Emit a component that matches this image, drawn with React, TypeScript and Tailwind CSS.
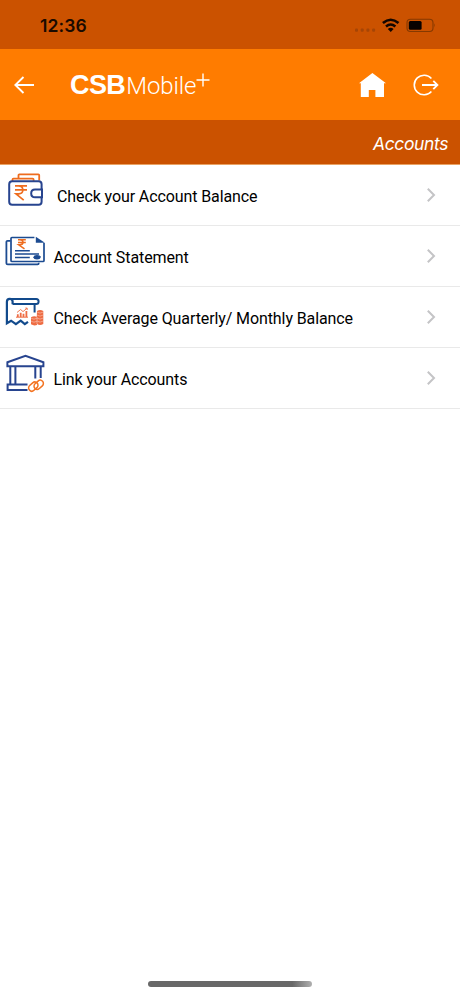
import type { ReactNode } from "react";

function WalletIcon() {
  return (
    <svg width="48" height="60" viewBox="0 0 48 60" fill="none">
      <path d="M18.5 13V10Q18.5 9.3 19.3 9.3H38.3Q39.2 9.3 39.2 10.2V15.5" stroke="#ee6c1e" strokeWidth="1.8" />
      <path d="M12.5 16V14.6Q12.5 13.6 13.5 13.6H32.6Q33.6 13.6 33.6 14.6V16" stroke="#ee6c1e" strokeWidth="1.8" />
      <rect x="9.2" y="16.3" width="32.4" height="23.4" rx="3" stroke="#27448f" strokeWidth="2" />
      <path d="M42 24.6H35Q31.2 24.6 31.2 28.4T35 32.2H42Z" fill="#fff" stroke="#27448f" strokeWidth="2" />
      <path d="M15 20.9H27M15 24.9H27M16 20.9H18.5Q22.8 21 22.8 25T18.5 28.9H16L23.7 35.2" stroke="#ee6c1e" strokeWidth="1.7" />
    </svg>
  );
}

function StatementIcon() {
  return (
    <svg width="48" height="60" viewBox="0 0 48 60" fill="none">
      <path d="M10.5 14.8H7.6Q6.4 14.8 6.4 15.8V37.2Q6.4 38.4 7.8 38.4H37.6Q38.8 38.4 38.8 36.8" stroke="#1c4b91" strokeWidth="1.8" />
      <path d="M34.4 11.5H11.9Q11 11.5 11 12.4V34.4Q11 35.5 12.1 35.5H43Q44 35.5 44 34.4V17" stroke="#1c4b91" strokeWidth="1.7" />
      <path d="M35.8 10.7V16.8H44.9Z" fill="#1c4b91" />
      <path d="M15 24.7H29.8M15 28H39M15 31.5H29.8" stroke="#1c4b91" strokeWidth="1.5" />
      <ellipse cx="37" cy="31.2" rx="3.4" ry="2.2" fill="#1c4b91" />
      <path d="M33.5 31.5L40.8 30.8" stroke="#1c4b91" />
      <path d="M18 13.8H25.8M18 16.4H25.8M18.4 13.8H20Q23 13.9 23 16.3T20 18.8H18.7L24.5 22.8" stroke="#ee6c1e" strokeWidth="1.5" />
    </svg>
  );
}

function AverageIcon() {
  return (
    <svg width="48" height="60" viewBox="0 0 48 60" fill="none">
      <path
        d="M12.6 17.2V14.4Q12.4 11.9 9.7 11.9Q6.9 11.9 6.9 14.8V36.3L11.1 33.7L15.9 37.2L20.7 33.7L24.8 37.2L28 34.8"
        stroke="#124a8c"
        strokeWidth="2.2"
      />
      <path d="M9.7 11.9H36.2Q38.6 12 38.6 14.5T36.2 17.1H12.6M34.6 17.2V25.5" stroke="#124a8c" strokeWidth="2" />
      <path d="M16 30.2H28" stroke="#ee6c43" />
      <path d="M17.8 30V27.3M20.7 30V25.8M23.5 30V26.8M26.4 30V24" stroke="#ee6c43" strokeWidth="1.8" />
      <path d="M17 25.5L20.6 22.5L23 24.6L27 21.3M25.3 21.1H27.2V23" stroke="#ee6c43" strokeWidth=".9" />
      <path
        d="M37 24Q40 21.8 43.3 24V37.1Q40 39 37 37.1V38Q34 39.2 31 37.3V30.2Q34 28.5 36.8 29.8Z"
        fill="#ee6c43"
      />
      <path
        d="M37.3 25.2Q40 27 42.9 25.2M37.3 28.2Q40 30 42.9 28.2M37.3 31.2Q40 33 42.9 31.2M37.3 34.2Q40 36 42.9 34.2M31.2 31.3Q34 33.1 36.8 31.3M31.2 34.3Q34 36.1 36.8 34.3M37 30V37"
        stroke="#fff"
        strokeWidth=".4"
      />
    </svg>
  );
}

function BankLinkIcon() {
  return (
    <svg width="48" height="60" viewBox="0 0 48 60" fill="none" stroke="#27448f" strokeWidth="2">
      <path d="M7.4 18.3V14.2L25.5 7.7L43.4 14.2V18.3Z" />
      <path d="M10.3 19V36.3M15.4 19V36.3M35.3 19V30.5M40.7 19V30" />
      <path d="M27.5 36.5H7.6V42.1H27.5" />
      <g stroke="#f37321" strokeWidth="1.5">
        <rect x="-5.2" y="-3.2" width="10.4" height="6.4" rx="3.2" transform="translate(33.3 38.6) rotate(-42)" />
        <rect x="-5.2" y="-3.2" width="10.4" height="6.4" rx="3.2" transform="translate(38.7 36.8) rotate(-42)" />
      </g>
    </svg>
  );
}

type Item = { label: string; icon: ReactNode; indent: string };

const items: Item[] = [
  { label: "Check your Account Balance", icon: <WalletIcon />, indent: "pl-[9px]" },
  { label: "Account Statement", icon: <StatementIcon />, indent: "pl-[5.5px]" },
  { label: "Check Average Quarterly/ Monthly Balance", icon: <AverageIcon />, indent: "pl-[5.5px]" },
  { label: "Link your Accounts", icon: <BankLinkIcon />, indent: "pl-[5.5px]" },
];

function StatusBar() {
  return (
    <div className="flex h-[49px] items-center justify-between bg-[#cb5200] pr-6 pl-10 pt-[3px]">
      <span className="pt-px font-['Inter',sans-serif] text-[17.5px] font-semibold tracking-[0.1px] text-[#1a0a00]">12:36</span>
      <svg width="82" height="18" viewBox="354 17 82 18" fill="none">
        <g fill="#a64505">
          <rect x="355" y="28.5" width="3" height="3.2" rx="1" />
          <rect x="360.7" y="28.5" width="3" height="3.2" rx="1" />
          <rect x="366.4" y="28.5" width="3" height="3.2" rx="1" />
          <rect x="372.1" y="28.5" width="3" height="3.2" rx="1" />
        </g>
        <path d="M382.9 23.1Q390.7 16.4 398.5 23.1M386 26.4Q390.7 22.6 395.4 26.4" stroke="#120600" strokeWidth="2.6" />
        <path d="M387.8 28.9Q390.7 26.8 393.6 28.9L390.7 32Z" fill="#120600" />
        <rect x="407" y="19.2" width="26" height="12.3" rx="3.5" stroke="#853900" strokeWidth="1.1" />
        <rect x="408.8" y="21" width="12.8" height="8.8" rx="1.5" fill="#080200" />
        <path d="M434.3 23.2Q436 25.3 434.3 27.4Z" fill="#853900" />
      </svg>
    </div>
  );
}

function Header() {
  return (
    <header className="flex h-[71px] items-center bg-[#ff7c00] pr-[21px] pl-[14px] text-white">
      <button type="button" aria-label="Back">
        <svg width="21" height="20" viewBox="0 0 21 20" fill="none" stroke="#fff" strokeWidth="1.9">
          <path d="M20 10H1.5M9.5 2L1.3 10L9.5 18" />
        </svg>
      </button>
      <div className="ml-[35px] flex items-baseline pt-px">
        <span className="font-['Liberation_Sans',sans-serif] text-[27px] leading-8 font-bold tracking-[-0.6px]">CSB</span>
        <span className="ml-px font-['Roboto',sans-serif] text-[24px] leading-8 font-light tracking-[-0.1px]">Mobile</span>
        <svg className="mt-[4px] self-start" width="14" height="14" viewBox="0 0 14 14" stroke="#fff" strokeWidth="1.4">
          <path d="M.5 7H13.5M7 .5V13.5" />
        </svg>
      </div>
      <button type="button" aria-label="Home" className="ml-auto">
        <svg width="27" height="24" viewBox="0 0 27 24" fill="#fff">
          <path d="M13.4 0L27 10.2H25V24H16.4V17H9.8V24H1.8V10.2H0Z" />
        </svg>
      </button>
      <button type="button" aria-label="Log out" className="ml-[27px]">
        <svg width="26" height="22" viewBox="0 0 26 22" fill="none" stroke="#fff" strokeWidth="1.6">
          <path d="M18.4 4.5A9.8 9.8 0 1 0 18.4 17.5" />
          <path d="M9 11H24M20.3 6.9L24.4 11L20.3 15.1" strokeWidth="1.9" />
        </svg>
      </button>
    </header>
  );
}

export default function App() {
  return (
    <div className="flex h-[996px] w-[460px] flex-col bg-white">
      <StatusBar />
      <Header />
      <div className="flex h-[45px] items-center justify-end border-b border-[#e9a263] bg-[#cb5200] pt-[5px] pr-3">
        <h1 className="font-['Inter',sans-serif] text-[17.5px] tracking-[-0.4px] text-white italic">Accounts</h1>
      </div>
      <ul>
        {items.map((item) => (
          <li key={item.label} className="flex h-[61px] items-center border-b border-[#e9e9e9] pr-6">
            {item.icon}
            <span className={`${item.indent} pt-[3px] font-['Roboto',sans-serif] text-[16px] tracking-[-0.1px] text-black`}>
              {item.label}
            </span>
            <svg className="ml-auto" width="10" height="16" viewBox="0 0 10 16" fill="none" stroke="#c4c4c6" strokeWidth="2">
              <path d="M1.8 1.8L8 8L1.8 14.2" />
            </svg>
          </li>
        ))}
      </ul>
      <div className="mx-auto mt-auto mb-[9px] h-[6px] w-[164px] rounded-full bg-linear-to-r from-[#686868] from-88% to-[#b0b0b0]" />
    </div>
  );
}
